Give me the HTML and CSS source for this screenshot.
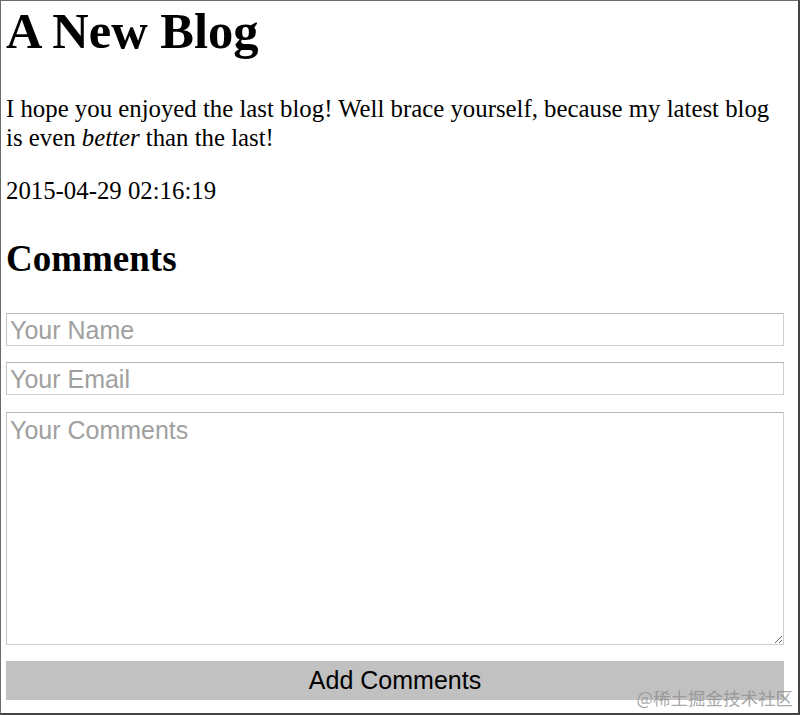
FILE: index.html
```html
<!DOCTYPE html>
<html lang="en">
<head>
  <meta charset="UTF-8">
  <meta name="viewport" content="width=device-width, initial-scale=1.0" />
  <title>A New Blog</title>
  <link rel="stylesheet" href="styles.css">
</head>
<body>
  <div class="page">
    <h1>A New Blog</h1>
    <p class="post-body">I hope you enjoyed the last blog! Well brace yourself, because my latest blog is even <em>better</em> than the last!</p>
    <p class="post-date">2015-04-29 02:16:19</p>

    <h2>Comments</h2>
    <form class="comment-form">
      <input type="text" class="field" placeholder="Your Name" />
      <input type="email" class="field" placeholder="Your Email" />
      <textarea class="field field-area" placeholder="Your Comments"></textarea>
      <button type="button" class="submit">Add Comments</button>
    </form>

    <span class="watermark">@稀土掘金技术社区</span>
  </div>
</body>
</html>
```

FILE: styles.css
```css
:root {
  font-family: "Liberation Serif", "Times New Roman", serif;
  --field-border: #cfcfcf;
  --placeholder: #a0a0a0;
}
html, body {
  margin: 0;
  background: #fff;
}
.page {
  position: relative;
  box-sizing: border-box;
  width: 800px;
  height: 715px;
  border: 1px solid #6a6a6a;
  border-bottom: 2px solid #444;
  border-right: 2px solid #444;
  padding: 0 0 0 5px;
  overflow: hidden;
  color: #000;
}
h1 {
  margin: 2px 0 0;
  font-size: 50.5px;
  line-height: 56px;
  font-weight: bold;
}
.post-body {
  margin: 35px 0 0;
  width: 775px;
  font-size: 24.8px;
  line-height: 29px;
}
.post-date {
  margin: 24px 0 0;
  font-size: 24.8px;
  line-height: 29px;
}
h2 {
  margin: 33px 0 0;
  font-size: 37px;
  line-height: 42px;
  font-weight: bold;
}
.comment-form {
  margin: 33px 0 0;
  width: 778px;
  display: flex;
  flex-direction: column;
  gap: 16px;
}
.field {
  box-sizing: border-box;
  width: 100%;
  height: 33px;
  margin: 0;
  padding: 1px 3px 0;
  font-family: "Liberation Sans", Arial, sans-serif;
  font-size: 25px;
  line-height: 30px;
  color: #000;
  background: #fff;
  border: 1px solid var(--field-border);
  border-top-color: #b5b5b5;
  border-left-color: #c4c4c4;
  border-radius: 0;
  outline: none;
}
.field::placeholder {
  color: var(--placeholder);
  opacity: 1;
}
.field-area {
  height: 233px;
  margin-top: 1px;
  padding: 4px 3px;
  line-height: 27px;
  resize: vertical;
}
.submit {
  box-sizing: border-box;
  height: 39px;
  margin: 0;
  padding: 0;
  border: none;
  background: #c1c1c1;
  font-family: "Liberation Sans", Arial, sans-serif;
  font-size: 25px;
  color: #000;
}
.watermark {
  position: absolute;
  right: 5px;
  bottom: 5px;
  font-family: "Noto Sans CJK SC", "Liberation Sans", sans-serif;
  font-size: 17.5px;
  line-height: 20px;
  color: rgba(140, 140, 140, 0.75);
}
```
